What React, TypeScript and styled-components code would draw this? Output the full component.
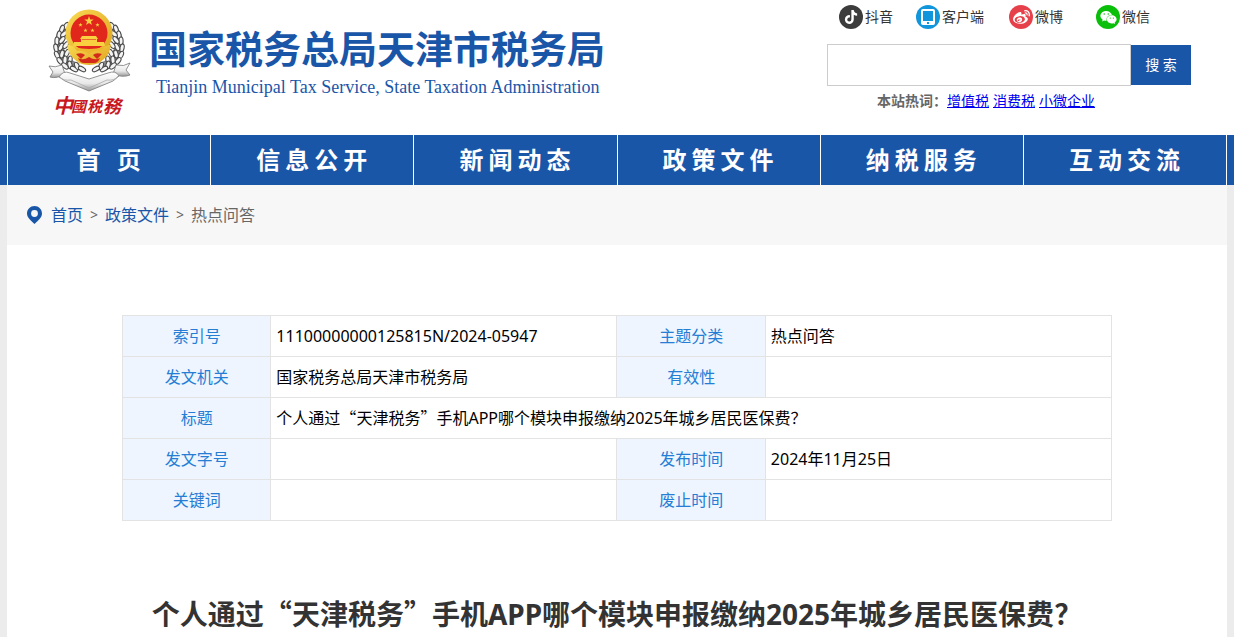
import React from 'react';
import styled, { createGlobalStyle } from 'styled-components';
import { FaTiktok, FaWeibo, FaWeixin } from 'react-icons/fa6';

const BLUE = '#1a56a8';
const SANS = '"Noto Sans", "Noto Sans CJK SC", sans-serif';
const CJK = '"Noto Sans CJK SC", sans-serif';

const GlobalStyle = createGlobalStyle`
  *, *::before, *::after { box-sizing: border-box; }
  body { margin: 0; background: #ececec; color: #000; font: 16px/24px ${SANS}; }
  a { color: inherit; text-decoration: none; }
`;

const HeaderBand = styled.div`background: #fff;`;

const Header = styled.header`
  display: flex;
  justify-content: space-between;
  max-width: 1220px;
  min-height: 135px;
  margin: 0 auto;
  padding: 5px 36px 0 41px;
`;

const Brand = styled.a`
  display: flex;
  align-items: flex-start;
  gap: 17px;
  color: ${BLUE};
`;

const EmblemSvg = styled.svg`
  display: block;
  width: 84px;
  height: 116px;
  flex: none;
`;

const BrandText = styled.div`padding-top: 14px;`;

const SiteName = styled.div`
  font: bold 38px/56px ${CJK};
  white-space: nowrap;
`;

const SiteNameEn = styled.div`
  padding-left: 7px;
  font: 18px/24px "Liberation Serif", serif;
  white-space: nowrap;
`;

const Tools = styled.div`
  width: 364px;
  flex: none;
`;

const Social = styled.nav`
  display: grid;
  grid-template-columns: 77px 93px 87px auto;
  padding-left: 12px;
`;

const SocialLink = styled.a`
  display: flex;
  align-items: center;
  gap: 2px;
  color: #333;
  font-size: 14px;
`;

const Badge = styled.span<{ $color: string }>`
  display: grid;
  place-items: center;
  width: 24px;
  height: 24px;
  border-radius: 50%;
  background: ${(p) => p.$color};
  color: #fff;
  svg { display: block; }
`;

const Search = styled.form`
  display: flex;
  align-items: center;
  margin-top: 15px;
`;

const SearchInput = styled.input`
  flex: 1;
  min-width: 0;
  height: 42px;
  padding: 0 10px;
  border: 1px solid #ccc;
  background: #fff;
  font: 14px/20px ${SANS};
  outline: none;
`;

const SearchButton = styled.button`
  width: 60px;
  height: 40px;
  padding: 0;
  border: 0;
  background: ${BLUE};
  color: #fff;
  font: 14px/20px ${SANS};
`;

const HotWords = styled.div`
  display: flex;
  gap: 4px;
  padding: 3px 0 0 50px;
  font-size: 14px;
  a { color: #0000ee; text-decoration: underline; }
`;

const HotLabel = styled.strong`
  margin-right: -4px;
  color: #666;
`;

const NavBand = styled.div`background: ${BLUE};`;

const Nav = styled.nav`
  display: grid;
  grid-template-columns: repeat(6, 1fr);
  max-width: 1220px;
  margin: 0 auto;
  border-left: 1px solid #fff;
`;

const NavLink = styled.a`
  padding-left: 4px;
  border-right: 1px solid #fff;
  color: #fff;
  font: bold 24px/50px ${SANS};
  letter-spacing: 5px;
  text-align: center;
  white-space: nowrap;
`;

const Page = styled.main`
  max-width: 1220px;
  min-height: calc(100vh - 185px);
  margin: 0 auto;
  background: #fff;
`;

const Breadcrumb = styled.nav`
  display: flex;
  align-items: center;
  gap: 7px;
  height: 60px;
  padding-left: 20px;
  background: #f7f7f7;
  color: #666;
  a { color: ${BLUE}; }
`;

const Pin = styled.svg`
  width: 15px;
  height: 18px;
  margin-right: 2px;
`;

const Separator = styled.span`font-size: 14px;`;

const Article = styled.article`padding: 70px 115px 0;`;

const InfoTable = styled.table`
  width: 100%;
  table-layout: fixed;
  border-collapse: collapse;
  th, td { height: 41px; border: 1px solid #e3e3e3; }
`;

const Label = styled.th`
  padding: 0;
  background: #eef5ff;
  color: #257dd4;
  font-weight: normal;
`;

const Value = styled.td`padding: 0 5px;`;

const Wide = styled.span`
  font-family: ${CJK};
  line-height: 1;
`;

const Title = styled.h1`
  margin: 72px 0 0;
  color: #333;
  font: bold 28px/42px ${SANS};
  text-align: center;
`;

const Question = () => (
  <>个人通过<Wide>“</Wide>天津税务<Wide>”</Wide>手机APP哪个模块申报缴纳2025年城乡居民医保费<Wide>？</Wide></>
);

const STAR = 'M0-5 1.2-1.6 4.8-1.6 1.9.6 2.9 4 0 1.9-2.9 4-1.9.6-4.8-1.6-1.2-1.6Z';

// Grains of the left wheat ear: x, y, rotation
const GRAINS = [
  [66, 26, 35], [62, 29, 20], [59, 35, 10], [64, 34, 50], [57, 41, 0], [62, 40, 40],
  [56, 48, -12], [61, 47, 30], [66, 45, 40], [57, 55, -25], [62, 54, 15], [67, 53, 25],
  [60, 61, -38], [65, 60, 5], [70, 60, 10], [65, 66, -50], [70, 65, -15], [74, 69, -60],
  [77, 66, -25], [82, 69, -60],
];

const WheatEar = () => (
  <g fill="#f4f4f4" stroke="#4a4a4a" strokeWidth="1.1">
    <path d="M66 28C55 40 56 60 78 68" fill="none" stroke="#8a8a8a" strokeWidth="9" />
    {GRAINS.map(([x, y, r]) => (
      <ellipse key={`${x}-${y}`} rx="2.1" ry="4" transform={`translate(${x} ${y}) rotate(${r})`} />
    ))}
  </g>
);

const Emblem = () => (
  <EmblemSvg viewBox="48 5 84 116" role="img" aria-label="中国税务">
    <defs>
      <linearGradient id="gold" x1="0" y1="0" x2="1" y2="1">
        <stop offset="0" stopColor="#f9dc55" />
        <stop offset="1" stopColor="#dfa01c" />
      </linearGradient>
      <linearGradient id="silver" x1="0" y1="0" x2="0" y2="1">
        <stop offset="0" stopColor="#fff" />
        <stop offset="0.6" stopColor="#e8e8e8" />
        <stop offset="1" stopColor="#999" />
      </linearGradient>
    </defs>
    <WheatEar />
    <g transform="translate(178 0) scale(-1 1)"><WheatEar /></g>
    <circle cx="89" cy="33" r="23.5" fill="url(#gold)" />
    <path d="M67 44q7 4 22 3 15 1 22-3-1 10-7 15l-5 4q-10 4-20 0l-5-4q-6-5-7-15Z" fill="url(#gold)" />
    <circle cx="89" cy="33" r="18.5" fill="#e1261c" />
    <g fill="#f8d040">
      <path d={STAR} transform="translate(89 21)" />
      {[[80.5, 25], [97.5, 25], [85.5, 30.5], [92.5, 30.5]].map(([x, y]) => (
        <path key={x} d={STAR} transform={`translate(${x} ${y}) scale(.45)`} />
      ))}
      <path d="M82 36h14l2 3h-1v3h7l1 4H73l1-4h7v-3h-1Z" />
    </g>
    <path d="M82 39.5h14" stroke="#e1261c" strokeWidth=".6" />
    <path d="M74 47q8 2 15 2t15-2l-3 4q-7-1-12 3-5-4-12-3Z" fill="#eeb62c" />
    <path d="M76 54q6-2 9 1l-4 4ZM102 54q-6-2-9 1l4 4Z" fill="#d42a1b" />
    <path d="M78 58q5 3 11-1 6 4 11 1-2 5-6 5H84q-4 0-6-5Z" fill="#d42a1b" />
    <g fill="url(#silver)" stroke="#777" strokeWidth=".8" strokeLinejoin="round">
      <path d="M49 66q6 2 13-1l3 9q-8 5-15 3l3-5Z" />
      <path d="M130 63q-6 4-14 2l-3 9q9 4 17 1l-4-5Z" />
      <path d="M59 77q4-7 11-4l19 6 19-6q8-3 11 3l-6 5-24 10-24-10Z" />
      <path d="M60 77q3 4 11 3l18 8 18-8q8 1 11-4" fill="none" stroke="#aaa" />
    </g>
    <g fill="#c8171e" fontFamily="Noto Sans CJK TC" fontStyle="italic">
      <text x="53" y="113" fontSize="20" fontWeight="bold">中</text>
      <text x="71" y="112" fontSize="15" fontWeight="bold">國</text>
      <text x="87" y="112" fontSize="15" fontWeight="bold">税</text>
      <text x="103" y="113" fontSize="18" fontWeight="bold">務</text>
    </g>
  </EmblemSvg>
);

const Tablet = () => (
  <svg width="14" height="16" viewBox="0 0 14 16" aria-hidden="true">
    <path fill="#fff" fillRule="evenodd" d="M2 0h10a2 2 0 0 1 2 2v12a2 2 0 0 1-2 2H2a2 2 0 0 1-2-2V2a2 2 0 0 1 2-2ZM2 2v10h10V2ZM6 13v2h2v-2Z" />
  </svg>
);

const SOCIAL = [
  { name: '抖音', color: '#3c3c3c', icon: <FaTiktok size={14} /> },
  { name: '客户端', color: '#1296db', icon: <Tablet /> },
  { name: '微博', color: '#e6404a', icon: <FaWeibo size={17} /> },
  { name: '微信', color: '#0abf0a', icon: <FaWeixin size={17} /> },
];

export default function App() {
  return (
    <div lang="zh-CN">
      <GlobalStyle />
      <HeaderBand>
        <Header>
          <Brand href="#">
            <Emblem />
            <BrandText>
              <SiteName>国家税务总局天津市税务局</SiteName>
              <SiteNameEn>Tianjin Municipal Tax Service, State Taxation Administration</SiteNameEn>
            </BrandText>
          </Brand>
          <Tools>
            <Social aria-label="社交媒体">
              {SOCIAL.map((s) => (
                <SocialLink href="#" key={s.name}>
                  <Badge $color={s.color}>{s.icon}</Badge>
                  {s.name}
                </SocialLink>
              ))}
            </Social>
            <Search>
              <SearchInput type="text" aria-label="搜索" />
              <SearchButton type="button">搜 索</SearchButton>
            </Search>
            <HotWords>
              <HotLabel>本站热词：</HotLabel>
              <a href="#">增值税</a>
              <a href="#">消费税</a>
              <a href="#">小微企业</a>
            </HotWords>
          </Tools>
        </Header>
      </HeaderBand>
      <NavBand>
        <Nav>
          {['首 页', '信息公开', '新闻动态', '政策文件', '纳税服务', '互动交流'].map((t) => (
            <NavLink href="#" key={t}>{t}</NavLink>
          ))}
        </Nav>
      </NavBand>
      <Page>
        <Breadcrumb aria-label="当前位置">
          <Pin viewBox="0 0 15 18" aria-hidden="true">
            <path fill={BLUE} d="M7.5 0C11.7 0 15 3.3 15 7.4 15 11.5 11 14.5 7.5 18 4 14.5 0 11.5 0 7.4 0 3.3 3.3 0 7.5 0Z" />
            <circle cx="7.5" cy="7.5" r="3.4" fill="#f7f7f7" />
          </Pin>
          <a href="#">首页</a>
          <Separator>&gt;</Separator>
          <a href="#">政策文件</a>
          <Separator>&gt;</Separator>
          <span>热点问答</span>
        </Breadcrumb>
        <Article>
          <InfoTable>
            <colgroup>
              <col width="15%" />
              <col width="35%" />
              <col width="15%" />
              <col width="35%" />
            </colgroup>
            <tbody>
              <tr>
                <Label scope="row">索引号</Label>
                <Value>11100000000125815N/2024-05947</Value>
                <Label scope="row">主题分类</Label>
                <Value>热点问答</Value>
              </tr>
              <tr>
                <Label scope="row">发文机关</Label>
                <Value>国家税务总局天津市税务局</Value>
                <Label scope="row">有效性</Label>
                <Value />
              </tr>
              <tr>
                <Label scope="row">标题</Label>
                <Value colSpan={3}><Question /></Value>
              </tr>
              <tr>
                <Label scope="row">发文字号</Label>
                <Value />
                <Label scope="row">发布时间</Label>
                <Value>2024年11月25日</Value>
              </tr>
              <tr>
                <Label scope="row">关键词</Label>
                <Value />
                <Label scope="row">废止时间</Label>
                <Value />
              </tr>
            </tbody>
          </InfoTable>
          <Title><Question /></Title>
        </Article>
      </Page>
    </div>
  );
}
